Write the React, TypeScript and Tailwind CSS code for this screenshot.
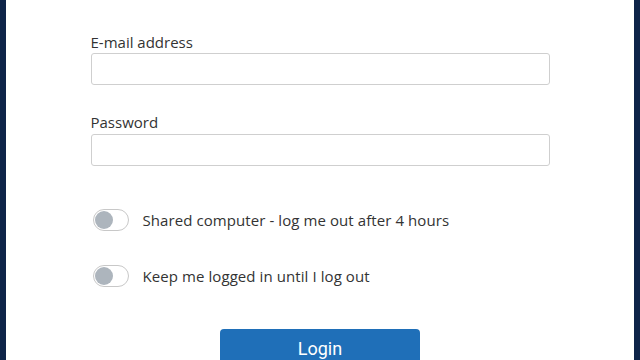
export default function App() {
  const Toggle = ({ label }: { label: string }) => (
    <div className="flex items-center h-[22px] pl-[2px]">
      <div className="relative w-[36px] h-[22px] rounded-full border border-[#c8c8c8] bg-white box-border">
        <div className="absolute left-[1px] top-[1px] w-[18px] h-[18px] rounded-full bg-[#adb5bd]" />
      </div>
      <span className="ml-[14px] text-[15px] leading-[20px] tracking-[0.08px] text-[#333]">{label}</span>
    </div>
  );
  return (
    <div className="w-[640px] h-[360px] overflow-hidden flex bg-[#0e2449]" style={{ fontFamily: '"Open Sans", "Liberation Sans", sans-serif' }}>
      <div className="ml-[6px] mr-[6px] flex-1 bg-white">
        <div className="w-[459px] mx-auto pt-[32px]">
          <label className="block text-[15px] leading-[20px] text-[#333] mb-[1px]">E-mail address</label>
          <input className="block w-full h-[32px] border border-[#cfcfcf] rounded-[3px] bg-white outline-none" />
          <label className="block text-[15px] leading-[20px] text-[#333] mt-[27px] mb-[2px]">Password</label>
          <input type="password" className="block w-full h-[32px] border border-[#cfcfcf] rounded-[3px] bg-white outline-none" />
          <div className="mt-[43px] flex flex-col gap-[34px]">
            <Toggle label="Shared computer - log me out after 4 hours" />
            <Toggle label="Keep me logged in until I log out" />
          </div>
          <div className="mt-[42px] flex justify-center">
            <button className="w-[200px] h-[40px] rounded-[4px] bg-[#1f6fb8] text-white text-[18px] leading-[40px]" style={{ fontFamily: 'Roboto, sans-serif' }}>Login</button>
          </div>
        </div>
      </div>
    </div>
  );
}
